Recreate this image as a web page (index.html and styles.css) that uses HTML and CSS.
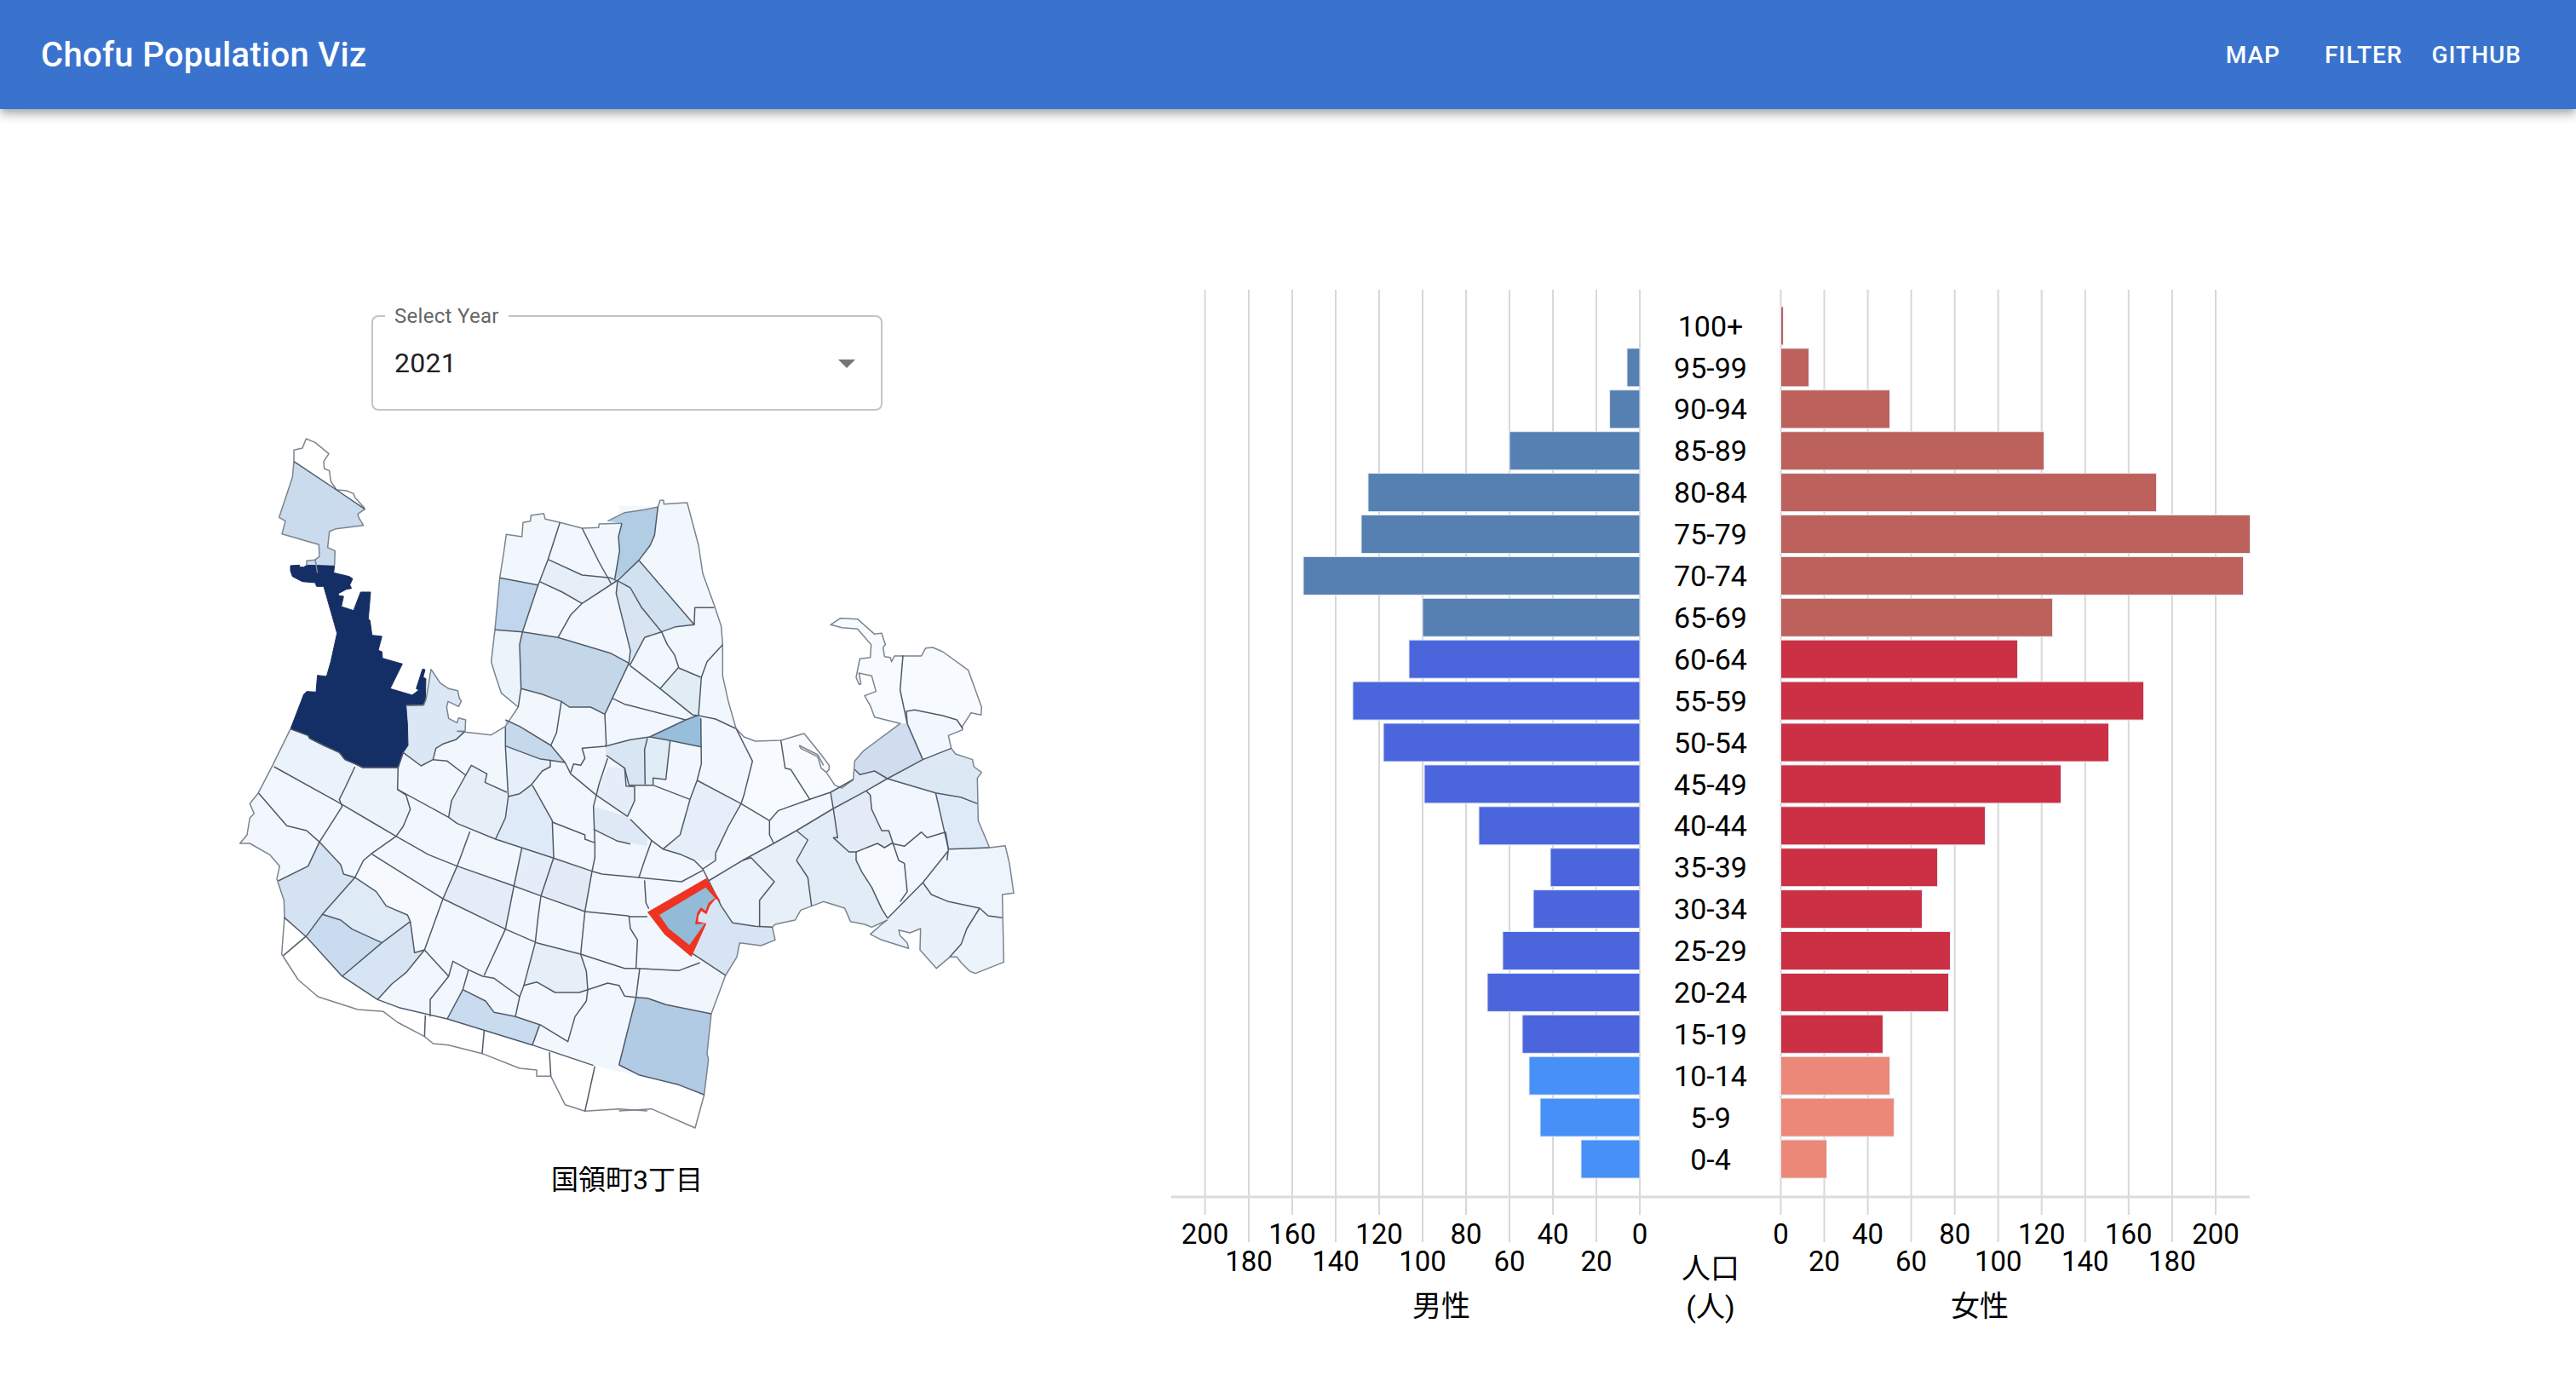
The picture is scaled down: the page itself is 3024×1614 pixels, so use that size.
FILE: index.html
```html
<!DOCTYPE html>
<html lang="ja">
<head>
  <meta charset="UTF-8" />
  <title>Chofu Population Viz</title>
  <link rel="stylesheet" href="styles.css">
</head>
<body>
  <header class="app-bar">
    <div class="app-title">Chofu Population Viz</div>
    <nav class="app-nav">
      <a class="nav-btn nav-map">Map</a>
      <a class="nav-btn">Filter</a>
      <a class="nav-btn">GitHub</a>
    </nav>
  </header>

  <main class="content">
    <section class="map-col">
      <div class="select-box">
        <span class="select-label">Select Year</span>
        <span class="select-value">2021</span>
        <svg class="select-arrow" viewBox="0 0 24 24"><path d="M7 10l5 5 5-5z"/></svg>
      </div>

      <svg class="map" viewBox="246 500 980 840">
        <!-- land under everything -->
        <g transform="translate(260 500) scale(.33333)">
          <polygon class="base" points="243,1067 622,1203 640,1150 745,1175 755,1135 780,1120 825,1105 855,1078 955,1088 1000,1060 1018,1030 1045,990 985,940 965,880 950,830 963,718 980,535 995,440 1003,382 1058,390 1062,340 1088,335 1090,315 1135,308 1140,328 1192,340 1270,360 1328,358 1330,345 1360,340 1420,305 1490,295 1520,285 1520,1300 130,1292 180,1195"/>
        </g>
        <g transform="translate(260 900) scale(.33333)">
          <polygon class="base" points="130,92 100,130 115,165 100,180 90,240 65,270 100,270 170,310 205,350 195,395 220,470 222,530 300,600 425,738 550,820 625,848 795,888 1095,980 1310,1052 1470,1090 1520,1100 1520,80 130,80"/>
        </g>
        <g transform="translate(740 560) scale(.33333)">
          <polygon class="base" points="97,105 105,82 117,82 118,95 200,90 240,240 255,340 295,450 320,525 325,590 325,700 345,790 372,885 400,915 440,930 530,927 612,903 670,975 700,1015 700,1030 690,1040 720,1085 745,1095 785,1065 790,1000 820,965 950,868 860,845 845,805 825,770 865,755 850,700 805,690 812,728 805,730 795,705 808,640 845,635 848,590 800,535 745,530 705,520 740,497 800,500 860,553 885,550 898,590 890,600 895,632 915,635 920,650 930,630 1025,630 1040,602 1065,600 1100,615 1190,680 1237,810 1235,838 1200,830 1168,880 1170,890 1120,910 1130,955 1145,975 1205,995 1210,1020 1237,1040 1222,1060 1225,1210 1265,1305 1320,1298 1340,1400 -40,1400 -40,100"/>
        </g>
        <g transform="translate(740 960) scale(.33333)">
          <polygon class="base" points="-60,90 1265,105 1320,98 1335,160 1350,265 1310,270 1315,508 1215,548 1195,540 1165,510 1150,490 1125,490 1078,530 1020,465 1022,390 985,405 945,395 950,415 975,440 980,460 885,430 845,410 885,375 905,360 850,385 825,375 775,365 755,318 680,295 640,310 600,325 580,360 510,375 500,385 510,430 460,450 385,440 375,490 335,555 285,690 20,632 -60,600"/>
        </g>

        <!-- shaded areas, by quarter of the map -->
        <g transform="translate(740 560) scale(.33333)">
          <polygon fill="#f7fbff" points="372,885 400,915 440,930 530,927 612,903 670,975 700,1015 700,1030 690,1040 720,1085 745,1095 705,1110 632,1135 520,1175 490,1210 390,1150 400,1120 430,1000"/>
          <polygon fill="#f7fbff" points="705,520 740,497 800,500 860,553 885,550 898,590 890,600 895,632 915,635 920,650 930,630 1025,630 1040,602 1065,600 1100,615 1190,680 1237,810 1235,838 1200,830 1168,880 1150,855 1100,840 1000,820 972,825 975,868 950,868 860,845 845,805 825,770 865,755 850,700 805,690 812,728 805,730 795,705 808,640 845,635 848,590 800,535 745,530"/>
          <polygon fill="#e1ecf5" points="105,745 170,672 248,705 240,840 220,838"/>
          <polygon fill="#d8e5f3" points="-88,948 0,925 68,915 50,960 52,1085 -5,1085 -20,1025 -85,980"/>
          <polygon fill="#e0edf6" points="60,920 140,928 125,1065 80,1060 80,1085 52,1085 50,960"/>
          <polygon fill="#dfe9f5" points="790,1035 808,1048 860,1035 905,1062 830,1105 710,1170 705,1110 785,1065"/>
          <polygon fill="#dde8f5" points="905,1062 1030,995 1130,955 1145,975 1205,995 1210,1020 1237,1040 1222,1060 1222,1150 1165,1128 1075,1112"/>
          <polygon fill="#cfddef" points="790,1000 820,965 950,868 975,868 1030,995 905,1062 860,1035 808,1048 790,1030"/>
          <polygon fill="#deeaf7" points="1075,1112 1222,1150 1225,1210 1265,1305 1120,1310 1110,1250"/>
          <polygon fill="#e4ebf7" points="715,1170 830,1105 845,1120 850,1170 885,1245 910,1245 925,1295 895,1305 870,1290 795,1320 770,1320 715,1270 730,1270"/>
          <polygon fill="#e6eff9" points="235,1068 390,1150 345,1230 300,1325 300,1350 230,1350 180,1330 115,1310 175,1260 210,1135"/>
          <polygon fill="#97bfdc" points="235,840 250,850 250,950 68,915 195,855"/>
        </g>
        <g transform="translate(740 960) scale(.33333)">
          <polygon fill="#d7e4f3" points="210,475 230,372 240,330 300,280 320,310 360,370 440,382 500,385 510,430 460,450 385,440 375,490 335,555"/>
          <polygon fill="#e7eff9" points="455,290 507,225 425,140 505,88 585,45 625,80 585,150 625,210 638,310 600,325 580,360 510,375 500,385 455,385"/>
          <polygon fill="#e1ecf7" points="585,45 710,-30 730,70 795,115 815,190 850,245 885,320 905,352 885,375 850,385 825,375 775,365 755,318 680,295 640,310 625,210 585,150 625,80"/>
          <polygon fill="#eaf2fb" points="275,222 425,140 507,225 455,290 455,385 360,370 320,310"/>
          <polygon fill="#e9f1fa" points="905,360 1030,228 1060,270 1120,295 1230,318 1185,390 1165,445 1125,490 1078,530 1020,465 1022,390 985,405 945,395 950,415 975,440 980,460 885,430 845,410 885,375"/>
          <polygon fill="#edf3fb" points="1230,318 1260,345 1310,352 1315,508 1215,548 1195,540 1165,510 1150,490 1125,490 1165,445 1185,390"/>
          <polygon fill="#eef4fc" points="1030,228 1115,125 1265,105 1320,98 1335,160 1350,265 1310,270 1310,352 1260,345 1230,318 1120,295 1060,270"/>
          <polygon fill="#f6fafe" points="795,115 815,190 850,245 885,320 905,352 950,295 975,260 965,160 945,130 920,90 895,105 870,90"/>
          <polygon fill="#f1f6fc" points="33,530 170,538 245,510 335,555 285,690 125,658 60,635 20,632"/>
          <polygon fill="#b0cbe3" points="20,632 60,635 125,658 285,690 270,830 275,850 260,975 170,940 30,905 -40,870"/>
        </g>
        <g transform="translate(260 900) scale(.33333)">
          <polygon fill="#d4e2f2" points="200,402 305,350 345,265 420,345 430,378 470,390 355,520 300,595 222,530 220,470"/>
          <polygon fill="#deeaf6" points="470,390 545,440 580,490 655,522 665,545 565,620 460,572 420,540 355,520"/>
          <polygon fill="#c9dbee" points="355,520 420,540 460,572 565,620 425,738 300,595"/>
          <polygon fill="#d7e4f4" points="665,545 680,655 715,645 650,725 600,765 550,820 425,738 565,620"/>
          <polygon fill="#c9dcef" points="850,785 930,825 960,865 1035,880 1125,910 1095,980 795,888"/>
          <polygon fill="#e4ecf8" points="830,350 1030,420 1000,572 780,465"/>
          <polygon fill="#e5eef8" points="1060,285 1165,320 1125,455 1030,420"/>
          <polygon fill="#e2ebf5" points="1165,320 1305,368 1280,510 1125,455"/>
          <polygon fill="#deeaf7" points="1010,105 1095,65 1165,190 1170,320 965,255 1000,180"/>
          <polygon fill="#e6eef8" points="880,-5 810,120 800,178 830,200 965,255 1000,180 1005,90 928,55 935,25"/>
          <polygon fill="#e6eef8" points="1105,620 1265,660 1285,720 1290,785 1260,795 1175,795 1110,758 1065,770"/>
          <polygon fill="#dfe9f5" points="1310,140 1430,175 1500,250 1500,280 1395,262 1310,220"/>
          <polygon fill="#e5edf8" points="1320,100 1430,175 1455,120 1455,70 1425,68 1420,5 1360,0 1330,70"/>
          <polygon fill="#f6faff" points="530,308 780,465 715,645 680,655 665,545 655,522 580,490 545,440 470,390 500,330"/>
        </g>
        <g transform="translate(260 500) scale(.33333)">
          <polygon fill="#eaf2fb" points="243,1067 305,1090 310,1100 360,1125 415,1150 435,1175 470,1195 440,1270 415,1315 420,1328 180,1195"/>
          <polygon fill="#ecf3fb" points="470,1195 622,1203 618,1280 650,1300 665,1350 640,1410 615,1445 425,1340 415,1315 440,1270"/>
          <polygon fill="#ebf3fb" points="963,718 1060,725 1050,770 1055,925 1045,990 985,940 965,880 950,830"/>
          <polygon fill="#e6eff9" points="1000,1127 1120,1172 1158,1175 1158,1200 1130,1215 1090,1265 1050,1295 1010,1305"/>
          <polygon fill="#e6eff8" points="1150,470 1270,525 1370,535 1390,545 1270,625 1200,585 1120,548"/>
          <polygon fill="#c9dbed" points="255,125 405,225 505,293 480,310 483,322 500,350 403,362 380,372 374,428 400,440 398,492 345,492 345,460 328,472 300,475 300,492 345,492 343,418 213,380 225,335 203,322 250,180"/>
          <polygon fill="#c1d6ec" points="980,535 1115,560 1060,725 963,718"/>
          <polygon fill="#c4d7e9" points="1060,725 1185,745 1370,800 1435,835 1350,1015 1300,990 1225,990 1197,970 1130,945 1055,925 1050,770"/>
          <polygon fill="#c6d9ec" points="1000,1035 1050,1058 1160,1125 1210,1185 1120,1172 1000,1127"/>
          <polygon fill="#dae7f4" points="650,985 712,983 720,965 738,857 770,905 800,925 832,932 838,960 845,968 835,988 798,970 793,990 800,1030 830,1045 835,1028 860,1035 858,1075 855,1078 825,1105 780,1120 755,1135 745,1175 703,1197 640,1150 657,1125 655,1050"/>
          <polygon fill="#b0cde4" points="1360,335 1420,305 1490,295 1537,285 1525,385 1510,420 1470,473 1400,535 1385,540 1402,440 1398,390 1410,343"/>
          <polygon fill="#d2e1f0" points="1400,540 1470,473 1665,700 1600,707 1550,725 1480,640 1440,570"/>
          <polygon fill="#d8e4f2" points="1395,545 1440,570 1480,640 1550,725 1490,745 1440,840 1440,790 1390,590"/>
          <polygon class="navy" points="243,492 275,490 275,497 290,497 300,490 398,493 395,517 450,530 462,538 452,560 458,572 440,575 412,590 412,597 430,600 422,636 465,650 490,585 525,585 517,680 523,685 530,737 565,741 552,790 565,795 567,818 637,838 594,925 672,948 695,930 686,925 708,856 717,858 710,885 720,890 718,965 712,983 650,985 655,1050 657,1125 640,1150 622,1203 497,1203 470,1190 435,1175 415,1150 360,1125 310,1100 305,1090 243,1067 290,945 300,935 333,937 338,878 370,882 385,830 407,730 390,670 360,565 335,565 330,552 285,548 250,530 243,510"/>
        </g>

        <!-- borders -->
        <g transform="translate(260 500) scale(.33333)">
          <polyline class="rim" points="255,125 255,85 285,78 298,45 330,58 378,98 360,125 362,150 380,158 385,195 405,225 440,228 465,238 470,252 500,285 505,293"/>
          <polyline class="rim" points="255,125 250,180 203,322 225,335 213,380 343,418 345,460 328,472 300,475 300,492"/>
          <polyline class="rim" points="505,293 480,310 483,322 500,350 403,362 380,372 374,428 400,440 398,492"/>
          <polyline class="rim" points="330,470 338,518"/>
          <polyline class="rim" points="650,985 712,983 720,965 738,857 770,905 800,925 832,932 838,960 845,968 835,988 798,970 793,990 800,1030 830,1045 835,1028 860,1035 858,1075 830,1075 855,1078 950,1088 1000,1058 1018,1030 1045,990 985,940 965,880 950,830 963,718 980,535 995,440 1003,382 1058,390 1062,340 1088,335 1090,315 1135,308 1140,328 1192,340 1270,360 1328,358 1330,345 1410,343"/>
          <polyline class="rim" points="243,1067 180,1195 130,1292"/>
          <polyline class="rim" points="1360,335 1420,305 1490,295 1537,285"/>

          <polyline class="edge" points="255,125 405,225 505,293"/>
          <polyline class="edge" points="243,1067 305,1090 310,1100 360,1125 415,1150 435,1175 470,1190 497,1203 622,1203"/>
          <polyline class="edge" points="855,1078 825,1105 780,1120 755,1135 745,1175 703,1197 640,1150 622,1203"/>
          <polyline class="edge" points="745,1175 795,1180 860,1230 880,1195 935,1225 928,1255 1005,1290"/>
          <polyline class="edge" points="980,535 1115,560 1060,725"/>
          <polyline class="edge" points="1192,340 1150,470 1120,548 1115,560"/>
          <polyline class="edge" points="1150,470 1270,525 1370,535 1392,545"/>
          <polyline class="edge" points="1120,548 1200,585 1270,625 1400,540 1470,473"/>
          <polyline class="edge" points="1270,625 1230,665 1185,745"/>
          <polyline class="edge" points="963,718 1060,725 1185,745 1370,800 1435,835"/>
          <polyline class="edge" points="1270,360 1330,480 1372,555"/>
          <polyline class="edge" points="1410,343 1398,390 1402,440 1385,540"/>
          <polyline class="edge" points="1060,725 1050,770 1055,925 1045,990"/>
          <polyline class="edge" points="1055,925 1130,945 1197,970 1180,1080 1160,1125"/>
          <polyline class="edge" points="1197,970 1225,990 1300,990 1350,1015 1435,835"/>
          <polyline class="edge" points="1350,1015 1355,1120 1352,1128 1270,1135 1280,1170 1265,1195 1240,1190 1230,1220"/>
          <polyline class="edge" points="1395,545 1390,590 1440,790 1435,835 1440,845"/>
          <polyline class="edge" points="1395,545 1440,570"/>
          <polyline class="edge" points="1000,1060 1000,1130 1010,1305"/>
          <polyline class="edge" points="1000,1035 1050,1058 1160,1125 1210,1185 1230,1225 1320,1300"/>
          <polyline class="edge" points="1000,1127 1120,1172 1210,1185"/>
          <polyline class="edge" points="1158,1175 1158,1200 1130,1215 1090,1265 1050,1295 1010,1305"/>
          <polyline class="edge" points="1375,958 1420,980 1440,985"/>
          <polyline class="edge" points="1352,1128 1440,1105"/>
          <polyline class="edge" points="1355,1160 1420,1205 1435,1265 1440,1265"/>
          <polyline class="edge" points="1360,1170 1330,1260 1320,1300"/>
        </g>

        <g transform="translate(260 900) scale(.33333)">
          <polyline class="rim" points="130,92 100,130 115,165 100,180 90,240 65,270 100,270 170,310 205,350 195,395 220,470 222,530 212,660 270,750 340,810 480,855 570,862 620,900 715,950 745,975 800,980 918,1010 1050,1062 1110,1068 1110,1090 1160,1090 1210,1190 1280,1213 1400,1205 1500,1212"/>

          <polyline class="edge" points="185,0 420,130 530,195 615,245 730,310 830,350 1030,420 1125,455 1280,510 1430,525 1440,528"/>
          <polyline class="edge" points="130,92 230,208 300,225 345,265 420,345 430,378 470,390 545,440 580,490 655,522 665,545 680,655 715,645"/>
          <polyline class="edge" points="470,0 435,75 415,115 425,140 345,265 305,350 200,402"/>
          <polyline class="edge" points="622,0 620,80 650,100 665,150 640,210 615,245 530,305 500,330 470,390 355,520 300,595"/>
          <polyline class="edge" points="530,308 780,465 1000,572 1110,620 1265,660 1420,710 1460,710"/>
          <polyline class="edge" points="620,80 800,178 830,200 965,255 1165,320 1305,368 1340,378 1470,390"/>
          <polyline class="edge" points="860,30 810,120 800,178"/>
          <polyline class="edge" points="875,228 830,350 780,465 715,645 800,738 815,685 870,715 920,738 960,745 1050,810 1065,770 1110,758 1175,795 1260,795 1290,785 1360,762 1400,770 1420,808 1460,812"/>
          <polyline class="edge" points="1010,105 1000,180 965,255"/>
          <polyline class="edge" points="1095,65 1165,190 1170,320 1125,455 1115,530 1105,620 1065,770"/>
          <polyline class="edge" points="1058,285 1030,420 1000,572 925,735"/>
          <polyline class="edge" points="1165,195 1280,240 1280,255 1315,268 1310,140 1320,100"/>
          <polyline class="edge" points="1315,268 1315,320 1305,368 1280,510 1265,660 1285,720 1290,785 1285,825 1245,880 1220,968 1125,910 1035,880 960,865 930,825 850,785"/>
          <polyline class="edge" points="1310,220 1395,262 1440,272"/>
          <polyline class="edge" points="1320,100 1430,175"/>
          <polyline class="edge" points="1430,175 1455,120 1455,70 1425,68 1420,5"/>
          <polyline class="edge" points="1035,880 1050,810"/>
          <polyline class="edge" points="870,715 850,785 795,888"/>
          <polyline class="edge" points="800,738 735,820 735,880"/>
          <polyline class="edge" points="220,530 300,600 425,738 550,820 625,848 795,888 1095,980 1310,1052"/>
          <polyline class="edge" points="300,595 218,665"/>
          <polyline class="edge" points="425,738 565,620 665,545"/>
          <polyline class="edge" points="355,520 420,540 460,572 565,620"/>
          <polyline class="edge" points="550,820 600,765 650,725 715,645"/>
          <polyline class="edge" points="1095,980 1120,910"/>
          <polyline class="edge" points="718,875 715,950"/>
          <polyline class="edge" points="925,930 918,1010"/>
          <polyline class="edge" points="1155,1005 1160,1090"/>
          <polyline class="edge" points="1315,1055 1280,1213"/>
          <polyline class="edge" points="1435,525 1440,570 1465,610 1460,710"/>
        </g>

        <g transform="translate(740 560) scale(.33333)">
          <polyline class="rim" points="97,105 105,82 117,82 118,95 200,90 240,240 255,340 295,450 320,525 325,590 325,700 345,790 372,885 400,915 440,930 530,927 612,903 670,975 700,1015 700,1030 690,1040 720,1085 745,1095 785,1065 790,1000 820,965 950,868 860,845 845,805 825,770 865,755 850,700 805,690 812,728 805,730 795,705 808,640 845,635 848,590 800,535 745,530 705,520 740,497 800,500 860,553 885,550 898,590 890,600 895,632 915,635 920,650 930,630 1025,630 1040,602 1065,600 1100,615 1190,680 1237,810 1235,838 1200,830 1168,880 1170,890 1120,910 1130,955 1145,975 1205,995 1210,1020 1237,1040 1222,1060 1225,1210 1265,1305"/>
          <polyline class="rim" points="595,945 600,955 660,985 672,1025 690,1040"/>
          <polyline class="rim" points="595,945 660,978 680,1015"/>

          <polyline class="edge" points="97,105 85,205 70,240 30,293"/>
          <polyline class="edge" points="30,293 225,520 227,460 295,460"/>
          <polyline class="edge" points="0,390 40,460 110,545 160,527 225,520"/>
          <polyline class="edge" points="110,545 50,565 0,660"/>
          <polyline class="edge" points="110,545 130,590 155,625 170,670 105,745"/>
          <polyline class="edge" points="170,672 248,705"/>
          <polyline class="edge" points="250,705 270,650 325,590"/>
          <polyline class="edge" points="250,705 240,840 300,852 370,885"/>
          <polyline class="edge" points="0,665 105,745 220,838 240,840"/>
          <polyline class="edge" points="0,805 195,855"/>
          <polyline class="edge" points="68,915 195,855 235,840"/>
          <polyline class="edge" points="0,925 68,915 140,928 250,950"/>
          <polyline class="edge" points="60,920 50,960 52,1082"/>
          <polyline class="edge" points="140,928 125,1065 80,1060 80,1085"/>
          <polyline class="edge" points="0,1085 80,1085 210,1135"/>
          <polyline class="edge" points="248,850 250,1010 235,1068 210,1135 175,1260 115,1310"/>
          <polyline class="edge" points="235,1068 390,1150 490,1210 490,1260 505,1290"/>
          <polyline class="edge" points="372,885 430,1000 400,1120 390,1150 345,1230 300,1325"/>
          <polyline class="edge" points="530,927 545,1025 565,1030 632,1135"/>
          <polyline class="edge" points="490,1210 520,1175 632,1135 705,1110 785,1065"/>
          <polyline class="edge" points="395,1350 505,1290 585,1245 710,1170 830,1105 905,1062 1030,995 1130,955"/>
          <polyline class="edge" points="705,1110 715,1170 730,1270 715,1270 770,1320 795,1320 870,1290 895,1305 920,1290 965,1300 1025,1250 1045,1270 1110,1250 1120,1310 1115,1350"/>
          <polyline class="edge" points="830,1105 845,1120 850,1170 885,1245 910,1245 945,1350"/>
          <polyline class="edge" points="790,1030 808,1048 860,1035 905,1062 1075,1112 1165,1128 1222,1150"/>
          <polyline class="edge" points="1075,1112 1120,1310 1265,1305"/>
          <polyline class="edge" points="975,868 950,750 960,628"/>
          <polyline class="edge" points="975,868 972,825 1000,820 1100,840 1150,855 1170,885"/>
          <polyline class="edge" points="975,868 1030,995"/>
          <polyline class="edge" points="585,1245 625,1278 585,1350"/>
          <polyline class="edge" points="795,1320 795,1350"/>
          <polyline class="edge" points="0,1205 75,1280 50,1350"/>
          <polyline class="edge" points="75,1280 115,1310 180,1330 225,1350"/>
        </g>

        <g transform="translate(740 960) scale(.33333)">
          <polyline class="rim" points="1265,105 1320,98 1335,160 1350,265 1310,270 1315,508 1215,548 1195,540 1165,510 1150,490 1125,490 1078,530 1020,465 1022,390 985,405 945,395 950,415 975,440 980,460 885,430 845,410 885,375 905,360 850,385 825,375 775,365 755,318 680,295 640,310 600,325 580,360 510,375 500,385 510,430 460,450 385,440 375,490 335,555 285,690 270,830 275,850 260,975 228,1092 75,1025 0,1030 -40,1032"/>

          <polyline class="edge" points="1118,118 1030,228 905,355"/>
          <polyline class="edge" points="1030,228 1060,270 1120,295 1230,318 1260,345 1310,352"/>
          <polyline class="edge" points="1230,318 1185,390 1165,445 1125,490"/>
          <polyline class="edge" points="795,150 815,190 850,245 885,320 905,352"/>
          <polyline class="edge" points="945,150 965,160 975,260 950,295"/>
          <polyline class="edge" points="275,222 395,150"/>
          <polyline class="edge" points="395,150 425,140 507,225 455,290 455,385"/>
          <polyline class="edge" points="585,150 625,210 638,310"/>
          <polyline class="edge" points="300,125 300,150 255,180"/>
          <polyline class="edge" points="225,150 255,180 320,310 360,370 440,382 500,385"/>
          <polyline class="edge" points="50,150 30,210 180,225 255,185"/>
          <polyline class="edge" points="50,220 55,300 65,320"/>
          <polyline class="edge" points="0,348 60,348"/>
          <polyline class="edge" points="20,530 170,538 245,510"/>
          <polyline class="edge" points="33,530 20,632"/>
          <polyline class="edge" points="210,472 335,555"/>
          <polyline class="edge" points="20,632 60,635 125,658 285,690"/>
          <polyline class="edge" points="-40,870 30,905 170,940 260,975"/>
          <polyline class="edge" points="20,632 -40,870"/>

          <!-- selected area -->
          <polygon class="picked" points="60,332 268,212 318,295 300,285 280,310 268,340 250,328 240,345 238,365 268,372 215,490 120,410"/>
          <polygon fill="#92bbd8" points="102,342 265,245 298,282 275,300 265,328 248,315 235,335 228,375 262,372 208,448 135,390"/>
        </g>
      </svg>

      <div class="map-caption">国領町3丁目</div>
    </section>

    <svg class="pyramid" viewBox="1360 330 1300 1270">
      <path class="grid" d="M1925 340V1426M1874 340V1458M1823 340V1426M1772 340V1458M1721 340V1426M1670 340V1458M1619 340V1426M1568 340V1458M1517 340V1426M1466 340V1458M1414.6 340V1426M2090.5 340V1426M2141.5 340V1458M2192.6 340V1426M2243.6 340V1458M2294.7 340V1426M2345.7 340V1458M2396.7 340V1426M2447.8 340V1458M2498.8 340V1426M2549.9 340V1458M2601 340V1426"/>
      <path class="axis" d="M1375 1405H2641"/>

      <g class="bars old-m">
        <rect x="1910" y="408.9" width="15" height="45"/>
        <rect x="1889.6" y="457.8" width="35.4" height="45"/>
        <rect x="1772" y="506.7" width="153" height="45"/>
        <rect x="1606" y="555.6" width="319" height="45"/>
        <rect x="1598" y="604.5" width="327" height="45"/>
        <rect x="1530" y="653.4" width="395" height="45"/>
        <rect x="1670" y="702.3" width="255" height="45"/>
      </g>
      <g class="bars mid-m">
        <rect x="1654" y="751.2" width="271" height="45"/>
        <rect x="1588" y="800.1" width="337" height="45"/>
        <rect x="1624" y="849" width="301" height="45"/>
        <rect x="1672" y="897.9" width="253" height="45"/>
        <rect x="1736" y="946.8" width="189" height="45"/>
        <rect x="1820" y="995.7" width="105" height="45"/>
        <rect x="1800" y="1044.6" width="125" height="45"/>
        <rect x="1764" y="1093.5" width="161" height="45"/>
        <rect x="1746" y="1142.4" width="179" height="45"/>
        <rect x="1787" y="1191.3" width="138" height="45"/>
      </g>
      <g class="bars young-m">
        <rect x="1795" y="1240.2" width="130" height="45"/>
        <rect x="1808" y="1289.1" width="117" height="45"/>
        <rect x="1856" y="1338" width="69" height="45"/>
      </g>
      <g class="bars old-f">
        <rect x="2090.5" y="360" width="3" height="45"/>
        <rect x="2090.5" y="408.9" width="33" height="45"/>
        <rect x="2090.5" y="457.8" width="128" height="45"/>
        <rect x="2090.5" y="506.7" width="309" height="45"/>
        <rect x="2090.5" y="555.6" width="441" height="45"/>
        <rect x="2090.5" y="604.5" width="551" height="45"/>
        <rect x="2090.5" y="653.4" width="543" height="45"/>
        <rect x="2090.5" y="702.3" width="319" height="45"/>
      </g>
      <g class="bars mid-f">
        <rect x="2090.5" y="751.2" width="278" height="45"/>
        <rect x="2090.5" y="800.1" width="426" height="45"/>
        <rect x="2090.5" y="849" width="385" height="45"/>
        <rect x="2090.5" y="897.9" width="329" height="45"/>
        <rect x="2090.5" y="946.8" width="240" height="45"/>
        <rect x="2090.5" y="995.7" width="184" height="45"/>
        <rect x="2090.5" y="1044.6" width="166" height="45"/>
        <rect x="2090.5" y="1093.5" width="199" height="45"/>
        <rect x="2090.5" y="1142.4" width="197" height="45"/>
        <rect x="2090.5" y="1191.3" width="120" height="45"/>
      </g>
      <g class="bars young-f">
        <rect x="2090.5" y="1240.2" width="128" height="45"/>
        <rect x="2090.5" y="1289.1" width="133" height="45"/>
        <rect x="2090.5" y="1338" width="54" height="45"/>
      </g>

      <g class="chart-text ages">
        <text x="2008" y="395">100+</text>
        <text x="2008" y="443.5">95-99</text>
        <text x="2008" y="492.4">90-94</text>
        <text x="2008" y="541.3">85-89</text>
        <text x="2008" y="590.2">80-84</text>
        <text x="2008" y="639.1">75-79</text>
        <text x="2008" y="688">70-74</text>
        <text x="2008" y="736.9">65-69</text>
        <text x="2008" y="785.8">60-64</text>
        <text x="2008" y="834.7">55-59</text>
        <text x="2008" y="883.6">50-54</text>
        <text x="2008" y="932.5">45-49</text>
        <text x="2008" y="981.4">40-44</text>
        <text x="2008" y="1030.3">35-39</text>
        <text x="2008" y="1079.2">30-34</text>
        <text x="2008" y="1128.1">25-29</text>
        <text x="2008" y="1177">20-24</text>
        <text x="2008" y="1225.9">15-19</text>
        <text x="2008" y="1274.8">10-14</text>
        <text x="2008" y="1323.7">5-9</text>
        <text x="2008" y="1372.6">0-4</text>
      </g>

      <g class="chart-text">
        <text x="1925" y="1460">0</text>
        <text x="1874" y="1492">20</text>
        <text x="1823" y="1460">40</text>
        <text x="1772" y="1492">60</text>
        <text x="1721" y="1460">80</text>
        <text x="1670" y="1492">100</text>
        <text x="1619" y="1460">120</text>
        <text x="1568" y="1492">140</text>
        <text x="1517" y="1460">160</text>
        <text x="1466" y="1492">180</text>
        <text x="1414.6" y="1460">200</text>

        <text x="2090.5" y="1460">0</text>
        <text x="2141.5" y="1492">20</text>
        <text x="2192.6" y="1460">40</text>
        <text x="2243.6" y="1492">60</text>
        <text x="2294.7" y="1460">80</text>
        <text x="2345.7" y="1492">100</text>
        <text x="2396.7" y="1460">120</text>
        <text x="2447.8" y="1492">140</text>
        <text x="2498.8" y="1460">160</text>
        <text x="2549.9" y="1492">180</text>
        <text x="2601" y="1460">200</text>

        <text class="cjk" x="2008" y="1501">人口</text>
        <text class="cjk" x="2008" y="1546">(人)</text>
        <text class="cjk" x="1692" y="1545">男性</text>
        <text class="cjk" x="2324" y="1545">女性</text>
      </g>
    </svg>
  </main>
</body>
</html>
```

FILE: styles.css
```css
body {
  margin: 0;
  background: #fff;
  font-family: Roboto, "Noto Sans CJK JP", sans-serif;
  color: #000;
}

.app-bar {
  position: relative;
  display: flex;
  justify-content: space-between;
  align-items: center;
  height: 128px;
  padding: 0 47px 0 48px;
  background: #3973cd;
  color: #fff;
  box-shadow: 0 4px 8px -2px rgba(0, 0, 0, 0.2), 0 8px 10px 0 rgba(0, 0, 0, 0.14), 0 2px 20px 0 rgba(0, 0, 0, 0.12);
}
.app-title {
  font-size: 40px;
  font-weight: 500;
  letter-spacing: 0.3px;
}
.app-nav {
  display: flex;
}
.nav-btn {
  padding: 0 17px;
  font-size: 28px;
  font-weight: 500;
  letter-spacing: 1px;
  text-transform: uppercase;
}
.nav-map {
  margin-right: 18px;
}

.content {
  display: flex;
  align-items: flex-start;
  padding: 202px 0 0 136px;
}

.map-col {
  display: flex;
  flex-direction: column;
  align-items: center;
  width: 1200px;
  padding-top: 40px;
  margin-right: 24px;
}

.select-box {
  position: relative;
  box-sizing: border-box;
  display: flex;
  justify-content: space-between;
  align-items: center;
  width: 600px;
  height: 112px;
  padding: 0 16px 0 25px;
  border: 2px solid #c4c4c4;
  border-radius: 8px;
}
.select-label {
  position: absolute;
  top: -15px;
  left: 14px;
  padding: 0 11px;
  background: #fff;
  font-size: 24px;
  line-height: 28px;
  letter-spacing: 0.3px;
  color: #666;
}
.select-value {
  font-size: 32px;
  letter-spacing: 0.3px;
  color: #212121;
}
.select-arrow {
  width: 48px;
  height: 48px;
  fill: #757575;
}

.map {
  display: block;
  width: 980px;
  height: 840px;
  margin-top: 18px;
}
.map polygon, .map polyline {
  stroke-linejoin: round;
}
.map .base {
  fill: #f2f7fe;
}
.map .navy {
  fill: #142e66;
  stroke: #1a2f60;
  stroke-width: 3;
}
.map .picked {
  fill: #ee3322;
}
.rim, .edge {
  fill: none;
  stroke-width: 4.5;
}
.rim {
  stroke: #7c848e;
}
.edge {
  stroke: #505a68;
}

.map-caption {
  margin-top: 23px;
  font-size: 32px;
  line-height: 44px;
}

.pyramid {
  display: block;
  width: 1300px;
  height: 1270px;
}
.grid {
  fill: none;
  stroke: #d8d8d8;
  stroke-width: 2;
}
.axis {
  fill: none;
  stroke: #dcdcdc;
  stroke-width: 3;
}
.bars rect {
  stroke: #e6eaf2;
  stroke-width: 1;
}
.old-m { fill: #5680b2; }
.mid-m { fill: #4b66dc; }
.young-m { fill: #4790f8; }
.old-f { fill: #bd615c; }
.mid-f { fill: #cc3044; }
.young-f { fill: #ec8878; }

.chart-text text {
  font-size: 33px;
  text-anchor: middle;
  fill: #000;
}
.chart-text.ages text {
  font-size: 34px;
}
.chart-text .cjk {
  font-size: 34px;
}
```
